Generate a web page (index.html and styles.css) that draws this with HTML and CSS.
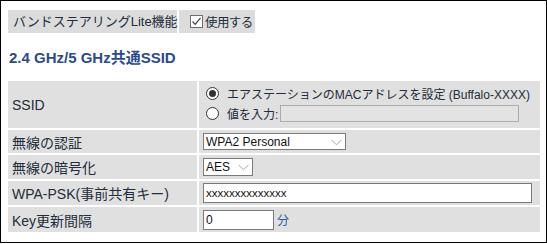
FILE: index.html
```html
<!DOCTYPE html>
<html lang="ja">
<head>
<meta charset="utf-8">
<title>バンドステアリングLite</title>
<link rel="stylesheet" href="styles.css">
</head>
<body>
<div class="frame">
  <div class="head">
    <div class="head-label">バンドステアリングLite機能</div>
    <div class="head-check">
      <span class="check">
        <svg width="11" height="11" viewBox="0 0 11 11"><path d="M1.5 5.5 L4.2 8.3 L9.5 1.8" fill="none" stroke="#3a3a3a" stroke-width="1.1"/></svg>
      </span>
      <span class="check-text">使用する</span>
    </div>
  </div>
  <div class="title">2.4 GHz/5 GHz共通SSID</div>
  <div class="table">
    <div class="th th-ssid">SSID</div>
    <div class="td td-ssid">
      <div class="radio-line first">
        <span class="radio on"></span>
        <span class="rtext">エアステーションのMACアドレスを設定 (Buffalo-XXXX)</span>
      </div>
      <div class="radio-line">
        <span class="radio"></span>
        <span class="rtext">値を入力:</span>
        <span class="input disabled wide"></span>
      </div>
    </div>

    <div class="th">無線の認証</div>
    <div class="td">
      <div class="select sel-auth"><span>WPA2 Personal</span>
        <svg class="chev" width="11" height="7" viewBox="0 0 11 7"><path d="M0.5 0.8 L5.5 5.8 L10.5 0.8" fill="none" stroke="#a8a8a8" stroke-width="1"/></svg>
      </div>
    </div>

    <div class="th">無線の暗号化</div>
    <div class="td">
      <div class="select sel-enc"><span>AES</span>
        <svg class="chev" width="11" height="7" viewBox="0 0 11 7"><path d="M0.5 0.8 L5.5 5.8 L10.5 0.8" fill="none" stroke="#a8a8a8" stroke-width="1"/></svg>
      </div>
    </div>

    <div class="th">WPA-PSK(事前共有キー)</div>
    <div class="td">
      <div class="input text psk">xxxxxxxxxxxxxx</div>
    </div>

    <div class="th">Key更新間隔</div>
    <div class="td">
      <div class="input text key">0</div><span class="unit">分</span>
    </div>
  </div>
</div>
</body>
</html>
```
FILE: styles.css
```css
* { box-sizing: border-box; }
html, body { margin: 0; padding: 0; background: #fff; }
body {
  font-family: "Liberation Sans", "Noto Sans CJK JP", sans-serif;
  color: #222c3a;
}
.frame {
  width: 547px;
  height: 243px;
  border: 1px solid #000;
  padding: 9px 0 0 7px;
}
.head {
  display: flex;
  gap: 2px;
  height: 23px;
}
.head-label {
  width: 169px;
  background: #dcdcdc;
  font-size: 13px;
  line-height: 23px;
  padding-left: 5px;
  white-space: nowrap;
}
.head-check {
  width: 76px;
  background: #dcdcdc;
  display: flex;
  align-items: center;
  padding-left: 11px;
  font-size: 12.5px;
}
.check {
  width: 13px;
  height: 13px;
  border: 1px solid #6e6e6e;
  background: #fff;
  display: flex;
  align-items: center;
  justify-content: center;
  margin-right: 2px;
}
.check-text { white-space: nowrap; letter-spacing: -0.6px; }
.title {
  font-size: 15px;
  font-weight: bold;
  color: #2b4b8d;
  height: 20px;
  line-height: 20px;
  margin: 15px 0 13px 1px;
  white-space: nowrap;
}
.table {
  display: grid;
  grid-template-columns: 189px 341px;
  grid-template-rows: 47px 23px 24px 24px 25px;
  gap: 2px;
  width: 532px;
}
.th, .td {
  background: #e0e0e0;
  display: flex;
  align-items: center;
}
.th {
  font-size: 14px;
  padding-left: 4px;
  white-space: nowrap;
}
.td { padding-left: 4px; font-size: 12px; }
.td-ssid {
  flex-direction: column;
  align-items: flex-start;
  justify-content: flex-start;
  padding: 3px 0 0 7px;
}
.radio-line {
  display: flex;
  align-items: center;
  height: 20px;
  white-space: nowrap;
}
.radio-line.first { height: 19px; }
.radio {
  width: 13px;
  height: 13px;
  border: 1px solid #333;
  border-radius: 50%;
  background: #fff;
  margin-right: 8px;
  display: flex;
  align-items: center;
  justify-content: center;
}
.radio.on::after {
  content: "";
  width: 7px;
  height: 7px;
  border-radius: 50%;
  background: #333;
}
.rtext { font-size: 12px; }
.input {
  display: block;
  border: 1px solid #7a7a7a;
  background: #fff;
}
.input.disabled {
  background: #e3e3e3;
  border-color: #ababab;
}
.wide {
  width: 239px;
  height: 17px;
  margin-left: 2px;
}
.select {
  display: flex;
  align-items: center;
  justify-content: space-between;
  border: 1px solid #7a7a7a;
  background: #fff;
  height: 17px;
  padding: 0 3px 0 2px;
  font-size: 12px;
  color: #111;
}
.sel-auth { width: 143px; }
.sel-enc { width: 50px; height: 18px; }
.chev { margin-top: 1px; }
.text {
  height: 20px;
  font-size: 11.5px;
  line-height: 18px;
  padding-left: 2px;
  color: #111;
}
.psk { width: 329px; }
.key { width: 71px; font-size: 12px; }
.unit { margin-left: 3px; font-size: 12px; color: #2c5d9c; }
```
